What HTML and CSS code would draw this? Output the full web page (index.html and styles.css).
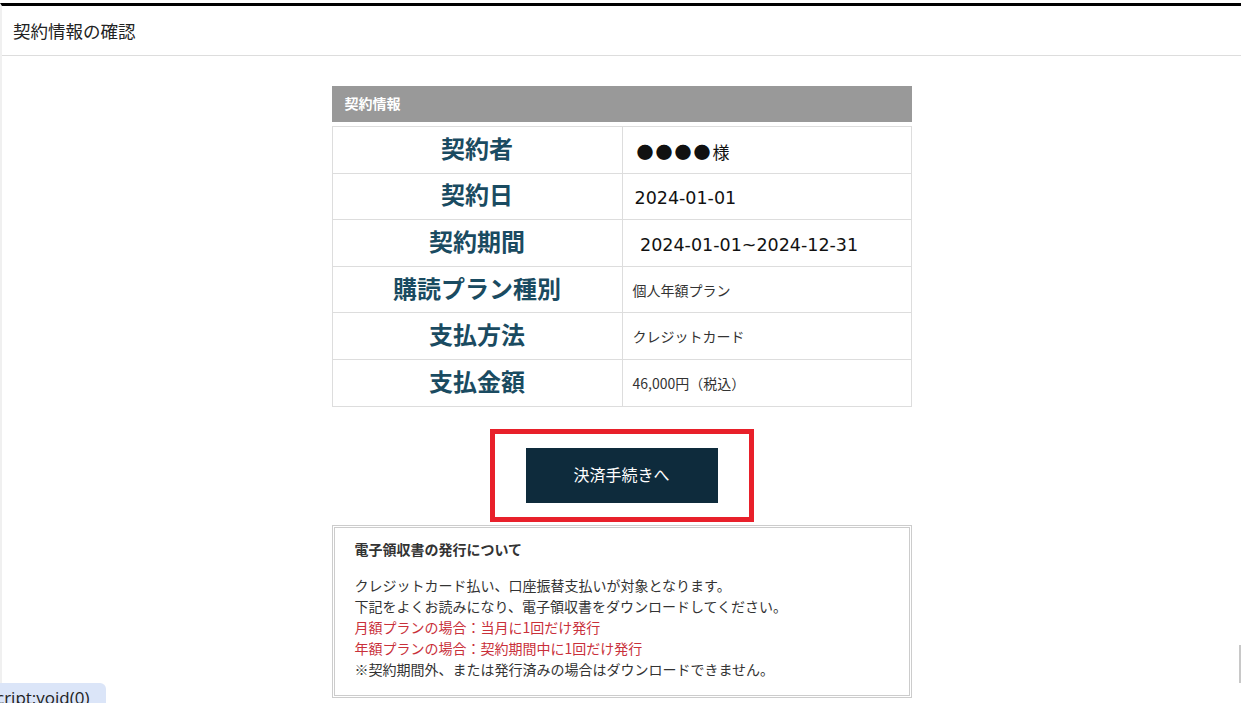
FILE: index.html
```html
<!DOCTYPE html>
<html lang="ja">
<head>
    <meta charset="UTF-8">
    <meta name="viewport" content="width=device-width, initial-scale=1.0">
    <title>契約情報の確認</title>
    <link rel="stylesheet" href="styles.css">
</head>
<body>
    <div class="page">
        <div class="page-header">契約情報の確認</div>

        <div class="contract">
            <div class="contract-title">契約情報</div>
            <table class="contract-table">
                <tr>
                    <th>契約者</th>
                    <td class="big name">●●●●様</td>
                </tr>
                <tr>
                    <th>契約日</th>
                    <td class="big">2024-01-01</td>
                </tr>
                <tr>
                    <th>契約期間</th>
                    <td class="big">&nbsp;2024-01-01~2024-12-31</td>
                </tr>
                <tr>
                    <th>購読プラン種別</th>
                    <td>個人年額プラン</td>
                </tr>
                <tr>
                    <th>支払方法</th>
                    <td>クレジットカード</td>
                </tr>
                <tr>
                    <th>支払金額</th>
                    <td>46,000円（税込）</td>
                </tr>
            </table>

            <div class="pay-wrap">
                <div class="pay-frame">
                    <a class="pay-button" href="javascript:void(0)">決済手続きへ</a>
                </div>
            </div>

            <div class="receipt">
                <p class="receipt-title">電子領収書の発行について</p>
                <p class="receipt-text">
                    クレジットカード払い、口座振替支払いが対象となります。<br>
                    下記をよくお読みになり、電子領収書をダウンロードしてください。<br>
                    <span class="red">月額プランの場合：当月に1回だけ発行</span><br>
                    <span class="red">年額プランの場合：契約期間中に1回だけ発行</span><br>
                    ※契約期間外、または発行済みの場合はダウンロードできません。
                </p>
            </div>
        </div>
    </div>

    <!-- ステータスバー -->
    <div class="status-bubble">cript:void(0)</div>
    <div class="scroll-stub"></div>
</body>
</html>
```

FILE: styles.css
```css
body {
    margin: 0;
    padding: 3px 0 0;
    font-family: "Noto Sans CJK JP", "Noto Sans", sans-serif;
    background-color: #ffffff;
    color: #333;
}

.page {
    border-top: 3px solid #000000;
    border-left: 2px solid #f0f0f0;
    min-height: 694px;
    box-sizing: border-box;
}

.page-header {
    height: 49px;
    line-height: 49px;
    padding-left: 11px;
    font-size: 17.5px;
    color: #222;
    border-bottom: 1px solid #dddddd;
}

.contract {
    width: 580px;
    margin: 30px auto 0;
}

.contract-title {
    height: 36px;
    line-height: 34px;
    padding-left: 13px;
    background-color: #999999;
    color: #ffffff;
    font-size: 14px;
    font-weight: bold;
}

.contract-table {
    width: 100%;
    margin-top: 4px;
    border-collapse: collapse;
}

.contract-table th,
.contract-table td {
    border: 1px solid #dddddd;
    padding: 0;
}

.contract-table th {
    width: 289px;
    height: 41.6px;
    padding-bottom: 4px;
    font-size: 24px;
    font-weight: bold;
    color: #1a4b61;
    text-align: center;
    line-height: 1;
}

.contract-table td {
    height: 45.6px;
    padding-left: 10px;
    font-size: 14px;
    color: #333;
}

.contract-table td.big {
    height: 41.6px;
    padding-top: 4px;
    padding-left: 12px;
    font-family: "DejaVu Sans", "Noto Sans CJK JP", sans-serif;
    font-size: 17.5px;
    color: #111;
}

.contract-table td.name {
    font-family: "Noto Sans CJK JP", sans-serif;
    font-size: 17px;
    letter-spacing: 2px;
    padding-left: 14px;
}

.pay-wrap {
    display: flex;
    justify-content: center;
    margin-top: 22px;
}

.pay-frame {
    border: 5px solid #e8202a;
    padding: 14px 30px;
    box-sizing: border-box;
    width: 264px;
    display: flex;
    justify-content: center;
}

.pay-button {
    display: block;
    width: 192px;
    height: 55px;
    line-height: 53px;
    background-color: #0e2b3c;
    color: #ffffff;
    text-align: center;
    font-size: 16px;
    text-decoration: none;
}

.receipt {
    margin-top: 3px;
    border: 3px double #cccccc;
    padding: 11px 20px 15px;
}

.receipt p {
    margin: 0;
}

.receipt-title {
    font-size: 14px;
    font-weight: bold;
    line-height: 20px;
    color: #333;
}

.receipt-text {
    margin-top: 16px !important;
    font-size: 14px;
    line-height: 21px;
    color: #333;
}

.red {
    color: #c9303a;
}

.status-bubble {
    position: fixed;
    left: 0;
    bottom: 0;
    height: 20px;
    width: 106px;
    background-color: #dbe5f8;
    border-top-right-radius: 6px;
    font-family: "Open Sans", "Noto Sans", sans-serif;
    font-size: 17px;
    line-height: 30px;
    color: #222;
    overflow: hidden;
    text-indent: -4px;
    white-space: nowrap;
}

.scroll-stub {
    position: fixed;
    right: 0;
    top: 645px;
    width: 2px;
    height: 38px;
    background-color: #c8c8c8;
}
```
